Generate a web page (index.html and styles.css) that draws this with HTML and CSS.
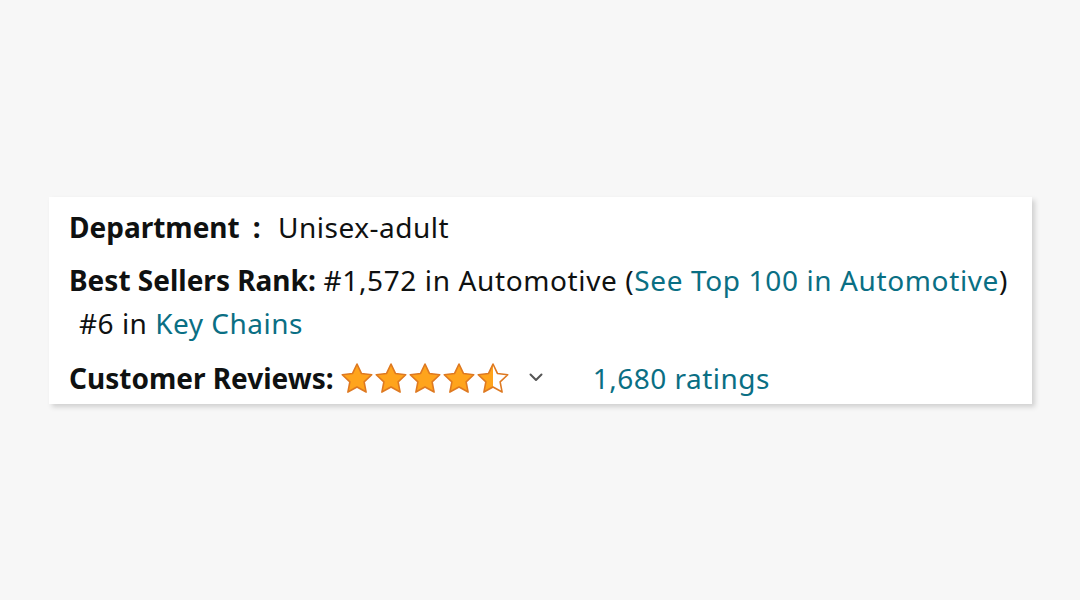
FILE: index.html
```html
<!DOCTYPE html>
<html lang="en">
<head>
<meta charset="utf-8">
<title>Product details</title>
<link rel="stylesheet" href="styles.css">
</head>
<body>
<div class="page">
  <section class="card">
    <div class="row">
      <span class="label">Department</span><span class="sep">:</span><span class="value">Unisex-adult</span>
    </div>
    <div class="rank">
      <div class="line"><span class="label">Best Sellers Rank:</span> <span class="wide">#1,572 in Automotive (<a class="link" href="#">See Top 100 in Automotive</a>)</span></div>
      <div class="line sub">#6 in <a class="link" href="#">Key Chains</a></div>
    </div>
    <div class="row reviews">
      <span class="label">Customer Reviews:</span>
      <span class="stars">
        <svg class="star" viewBox="0 0 32 31" width="32" height="31"><path class="full" d="M16 1 L20.41 10.43 L30.74 11.71 L23.13 18.82 L25.11 29.04 L16 24 L6.89 29.04 L8.87 18.82 L1.26 11.71 L11.59 10.43 Z"/></svg>
        <svg class="star" viewBox="0 0 32 31" width="32" height="31"><path class="full" d="M16 1 L20.41 10.43 L30.74 11.71 L23.13 18.82 L25.11 29.04 L16 24 L6.89 29.04 L8.87 18.82 L1.26 11.71 L11.59 10.43 Z"/></svg>
        <svg class="star" viewBox="0 0 32 31" width="32" height="31"><path class="full" d="M16 1 L20.41 10.43 L30.74 11.71 L23.13 18.82 L25.11 29.04 L16 24 L6.89 29.04 L8.87 18.82 L1.26 11.71 L11.59 10.43 Z"/></svg>
        <svg class="star" viewBox="0 0 32 31" width="32" height="31"><path class="full" d="M16 1 L20.41 10.43 L30.74 11.71 L23.13 18.82 L25.11 29.04 L16 24 L6.89 29.04 L8.87 18.82 L1.26 11.71 L11.59 10.43 Z"/></svg>
        <svg class="star" viewBox="0 0 32 31" width="32" height="31"><defs><linearGradient id="half" x1="0" y1="0" x2="1" y2="0"><stop offset="0.5" stop-color="#ffa41c"/><stop offset="0.5" stop-color="#ffffff"/></linearGradient></defs><path class="half" d="M16 1 L20.41 10.43 L30.74 11.71 L23.13 18.82 L25.11 29.04 L16 24 L6.89 29.04 L8.87 18.82 L1.26 11.71 L11.59 10.43 Z"/></svg>
      </span>
      <svg class="chev" viewBox="0 0 14 9" width="14" height="9"><polyline points="1.5,1.5 7,7 12.5,1.5"/></svg>
      <a class="link ratings" href="#">1,680 ratings</a>
    </div>
  </section>
</div>
</body>
</html>
```
FILE: styles.css
```css
html, body {
  margin: 0;
  padding: 0;
}
body {
  background: #f7f7f7;
  font-family: "Noto Sans", "Open Sans", sans-serif;
  color: #0f1111;
}
.page {
  width: 1080px;
  height: 600px;
  padding: 197px 0 0 49px;
  box-sizing: border-box;
}
.card {
  width: 983px;
  height: 207px;
  box-sizing: border-box;
  background: #ffffff;
  box-shadow: 3px 3px 5px rgba(0, 0, 0, 0.16);
  padding: 9px 0 0 20px;
  font-size: 28px;
  line-height: 43px;
  letter-spacing: 0.5px;
}
.label {
  font-weight: 700;
  letter-spacing: 0;
}
.sep {
  margin: 0 17px 0 13px;
  font-weight: 700;
}
.row {
  display: flex;
  align-items: center;
  height: 43px;
}
.rank {
  margin-top: 10px;
}
.wide {
  letter-spacing: 0.62px;
}
.line.sub {
  padding-left: 10px;
}
.link {
  color: #0a6f84;
  text-decoration: none;
}
.reviews {
  margin-top: 12px;
}
.stars {
  display: flex;
  gap: 2px;
  margin-left: 7px;
}
.star path {
  stroke: #de7921;
  stroke-width: 1.6;
  stroke-linejoin: round;
}
.star .full {
  fill: #ffa41c;
}
.star .half {
  fill: url(#half);
}
.chev {
  margin-left: 20px;
  margin-top: -2px;
}
.chev polyline {
  fill: none;
  stroke: #555555;
  stroke-width: 2;
  stroke-linecap: round;
  stroke-linejoin: round;
}
.ratings {
  margin-left: 50px;
}
```
